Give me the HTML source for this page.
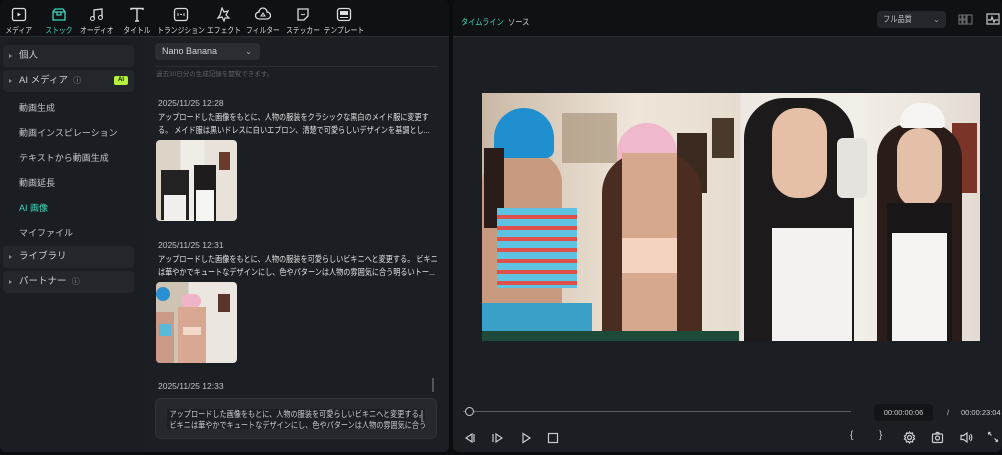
<!DOCTYPE html>
<html><head><meta charset="utf-8"><style>
*{margin:0;padding:0;box-sizing:border-box}
body{width:1002px;height:455px;background:#0b0c0e;font-family:"Liberation Sans","Noto Sans CJK JP",sans-serif;color:#cfd2d6;overflow:hidden;position:relative;font-size:9px}
.abs{position:absolute}
.left{left:0;top:0;width:449px;height:452px;background:#1b1e22;border-radius:6px;overflow:hidden}
.tb{left:0;top:0;width:449px;height:37px;background:#0f1114;border-bottom:1px solid #2a2d31}
.tool{position:absolute;top:7px;width:60px;margin-left:-30px;text-align:center;color:#d8dadd;white-space:nowrap}
.tool svg{display:block;margin:0 auto 3px}
.tool span{display:inline-block;font-size:8px;transform:scaleX(.85)}
.side{left:0;top:38px;width:145px;height:414px;background:#1a1d21}
.grp{position:absolute;left:3px;width:131px;height:22px;background:#23262b;border-radius:4px;font-size:9.5px;line-height:22px;padding-left:16px;color:#c9ccd0}
.grp:before{content:"";position:absolute;left:6px;top:9px;border-left:3px solid #8a8d92;border-top:2px solid transparent;border-bottom:2px solid transparent}
.item{position:absolute;left:19px;font-size:9px;color:#c2c5ca}
.ts{position:absolute;left:158px;font-size:8.5px;color:#bfc2c7}
.desc{position:absolute;left:158px;width:320px;font-size:8.5px;line-height:13px;color:#e0e2e5;white-space:nowrap;transform:scaleX(.84);transform-origin:left top}
.thumb{position:absolute;left:156px;width:81px;height:81px;border-radius:4px;overflow:hidden;background:#e9e4de}
.right{left:453px;top:0;width:549px;height:452px;background:#1b1e22;border-radius:6px;overflow:hidden}
.rh{left:0;top:0;width:549px;height:37px;background:#0f1114;border-bottom:1px solid #2a2d31}
.ic{position:absolute;stroke:#c9ccd0;fill:none;stroke-width:1.2}
.sq{white-space:nowrap;display:inline-block;transform:scaleX(.85);transform-origin:left center}
</style></head><body>
<div class="abs left">
 <div class="abs tb">
  <div class="tool" style="left:19px"><svg width="16" height="15" viewBox="0 0 16 15"><rect x="1.5" y="1.5" width="13" height="12" rx="2" stroke="#ddd" fill="none" stroke-width="1.3"/><path d="M6.5 5.5v4l3.5-2z" fill="#ddd"/></svg><span>メディア</span></div>
  <div class="tool" style="left:59px;color:#3fd6b8"><svg width="16" height="15" viewBox="0 0 16 15"><path d="M2 5h12v8H2zM2 5l2-3h8l2 3M6 5v3h4V5" stroke="#3fd6b8" fill="none" stroke-width="1.3"/></svg><span>ストック</span></div>
  <div class="tool" style="left:97px"><svg width="16" height="15" viewBox="0 0 16 15"><path d="M5 11V3l8-1v8" stroke="#ddd" fill="none" stroke-width="1.3"/><circle cx="3.5" cy="11.5" r="2" stroke="#ddd" fill="none"/><circle cx="11.5" cy="10.5" r="2" stroke="#ddd" fill="none"/></svg><span>オーディオ</span></div>
  <div class="tool" style="left:137px"><svg width="16" height="15" viewBox="0 0 16 15"><path d="M2 3V1.5h12V3M8 1.5V14M6 14h4" stroke="#ddd" fill="none" stroke-width="1.4"/></svg><span>タイトル</span></div>
  <div class="tool" style="left:181px"><svg width="16" height="15" viewBox="0 0 16 15"><rect x="1.5" y="1.5" width="13" height="12" rx="2.5" stroke="#ddd" fill="none" stroke-width="1.3"/><path d="M5 6v3M11 6v3M7 7.5h2" stroke="#ddd"/></svg><span>トランジション</span></div>
  <div class="tool" style="left:224px"><svg width="16" height="15" viewBox="0 0 16 15"><path d="M6 1l2 4 4-1-2 4 3 3-4 0-1 3-2-4-4 1 2-3z" stroke="#ddd" fill="none" stroke-width="1.2"/></svg><span>エフェクト</span></div>
  <div class="tool" style="left:263px"><svg width="16" height="15" viewBox="0 0 16 15"><path d="M4 12a3.5 3.5 0 0 1 0-7 4 4 0 0 1 8 0 3.5 3.5 0 0 1 0 7z" stroke="#ddd" fill="none" stroke-width="1.3"/><path d="M8 6l-2 3 4 0z" stroke="#ddd" fill="none"/></svg><span>フィルター</span></div>
  <div class="tool" style="left:303px"><svg width="16" height="15" viewBox="0 0 16 15"><path d="M3 2h10v7l-4 4H3z" stroke="#ddd" fill="none" stroke-width="1.3"/><path d="M6 7c1 1 3 1 4 0" stroke="#ddd" fill="none"/></svg><span>ステッカー</span></div>
  <div class="tool" style="left:344px"><svg width="16" height="15" viewBox="0 0 16 15"><rect x="1.5" y="1.5" width="13" height="12" rx="2.5" stroke="#ddd" fill="none" stroke-width="1.3"/><rect x="4" y="4" width="8" height="4" fill="#ddd"/><path d="M4 10.5h8" stroke="#ddd"/></svg><span>テンプレート</span></div>
 </div>
 <div class="abs side">
  <div class="grp" style="top:7px">個人</div>
  <div class="grp" style="top:32px">AI メディア &nbsp;<span style="font-size:8px;color:#999">ⓘ</span><span style="position:absolute;right:6px;top:6px;width:14px;height:9px;background:#b6f23a;border-radius:2px;color:#111;font-size:6px;line-height:9px;text-align:center;font-weight:bold">AI</span></div>
  <div class="item" style="top:63px">動画生成</div>
  <div class="item" style="top:88px">動画インスピレーション</div>
  <div class="item" style="top:113px">テキストから動画生成</div>
  <div class="item" style="top:138px">動画延長</div>
  <div class="item" style="top:163px;color:#3fd6b8">AI 画像</div>
  <div class="item" style="top:188px">マイファイル</div>
  <div class="grp" style="top:208px">ライブラリ</div>
  <div class="grp" style="top:233px">パートナー &nbsp;<span style="font-size:8px;color:#999">ⓘ</span></div>
 </div>
 <div class="abs" style="left:155px;top:43px;width:105px;height:17px;background:#2a2d32;border-radius:4px;font-size:9px;line-height:17px;padding-left:7px;color:#d0d3d7">Nano Banana<span style="position:absolute;right:8px;color:#aaa;font-size:8px">⌄</span></div>
 <div class="abs" style="left:155px;top:66px;width:283px;border-top:1px solid #2a2d31"></div>
 <div class="abs" style="left:156px;top:68px;font-size:6.5px;color:#5d6166">過去30日分の生成記録を閲覧できます。</div>
 <div class="ts" style="top:98px">2025/11/25 12:28</div>
 <div class="desc" style="top:111px">アップロードした画像をもとに、人物の服装をクラシックな黒白のメイド服に変更す<br>る。 メイド服は黒いドレスに白いエプロン、清楚で可愛らしいデザインを基調とし...</div>
 <div class="thumb" style="top:140px;background:linear-gradient(90deg,#ddd4c8 0 30%,#f0ece6 30% 60%,#e8e2da 60%)"><div class="abs" style="left:5px;top:30px;width:28px;height:50px;background:#222"></div><div class="abs" style="left:8px;top:55px;width:22px;height:26px;background:#f2f0ee"></div><div class="abs" style="left:38px;top:25px;width:22px;height:56px;background:#1e1c1c"></div><div class="abs" style="left:40px;top:50px;width:18px;height:31px;background:#f5f5f3"></div><div class="abs" style="left:63px;top:12px;width:11px;height:18px;background:#6a3a2a"></div></div>
 <div class="ts" style="top:240px">2025/11/25 12:31</div>
 <div class="desc" style="top:253px">アップロードした画像をもとに、人物の服装を可愛らしいビキニへと変更する。 ビキニ<br>は華やかでキュートなデザインにし、色やパターンは人物の雰囲気に合う明るいトー...</div>
 <div class="thumb" style="top:282px;background:linear-gradient(90deg,#cfc3b3 0 40%,#ebe6df 40%)"><div class="abs" style="left:0;top:5px;width:14px;height:14px;background:#2a8fd0;border-radius:50%"></div><div class="abs" style="left:0;top:30px;width:18px;height:51px;background:#c99a86"></div><div class="abs" style="left:3px;top:42px;width:12px;height:12px;background:#5ab8d8"></div><div class="abs" style="left:25px;top:12px;width:20px;height:14px;background:#f0b4c8;border-radius:8px"></div><div class="abs" style="left:22px;top:25px;width:28px;height:56px;background:#d8a892"></div><div class="abs" style="left:27px;top:45px;width:18px;height:8px;background:#f2d8c8"></div><div class="abs" style="left:62px;top:12px;width:12px;height:18px;background:#5a3428"></div></div>
 <div class="ts" style="top:381px">2025/11/25 12:33</div>
 <div class="abs" style="left:432px;top:378px;width:2px;height:14px;background:#555"></div>
 <div class="abs" style="left:155px;top:398px;width:282px;height:41px;background:#25282d;border-radius:6px;border:1px solid #2f3237"></div>
 <div class="abs" style="left:167px;top:409px;width:258px;height:20px;background:#1c1f23;overflow:hidden"><div style="font-size:8.5px;line-height:11px;padding-left:3px;color:#c8cbd0;white-space:nowrap;transform:scaleX(.84);transform-origin:left top">アップロードした画像をもとに、人物の服装を可愛らしいビキニへと変更する。<br>ビキニは華やかでキュートなデザインにし、色やパターンは人物の雰囲気に合う</div></div>
 <div class="abs" style="left:421px;top:410px;width:2px;height:12px;background:#666"></div>
</div>
<div class="abs right">
 <div class="abs rh">
  <div class="abs" style="left:8px;top:16px;font-size:8.5px;color:#3fd6b8"><span class="sq">タイムライン</span></div>
  <div class="abs" style="left:55px;top:16px;font-size:8.5px;color:#d0d3d7"><span class="sq">ソース</span></div>
  <div class="abs" style="left:424px;top:11px;width:69px;height:17px;background:#23262b;border-radius:4px;font-size:8.5px;line-height:17px;padding-left:6px;color:#c0c3c7"><span class="sq">フル品質</span><span style="position:absolute;right:6px;color:#999">⌄</span></div>
  <svg class="ic" style="left:505px;top:14px" width="15" height="11" viewBox="0 0 15 11"><rect x="1" y="1" width="3" height="4" stroke="#666"/><rect x="1" y="6" width="3" height="4" stroke="#666"/><rect x="5" y="1" width="3" height="4" stroke="#666"/><rect x="5" y="6" width="3" height="4" stroke="#666"/><rect x="9" y="1" width="5" height="9" stroke="#666"/></svg>
  <svg class="ic" style="left:533px;top:13px" width="14" height="12" viewBox="0 0 14 12"><rect x="1" y="1" width="12" height="10"/><path d="M2 7h3l1-3 2 5 1-2h3"/></svg>
 </div>
 <div class="abs" style="left:29px;top:93px;width:498px;height:248px;overflow:hidden;background:#e8e0d6">
  <div class="abs" style="left:0;top:0;width:257px;height:248px;background:linear-gradient(90deg,#c9b8a6 0,#ddd0c0 30%,#efe6da 60%,#e6dccf 100%)"></div>
  <div class="abs" style="left:80px;top:20px;width:55px;height:50px;background:#a08a70;opacity:.6"></div>
  <div class="abs" style="left:195px;top:40px;width:30px;height:60px;background:#3a2a20"></div>
  <div class="abs" style="left:230px;top:25px;width:22px;height:40px;background:#4a3a2c"></div>
  <div class="abs" style="left:0;top:60px;width:80px;height:188px;background:#c89a80;border-radius:30px 30px 0 0"></div>
  <div class="abs" style="left:12px;top:15px;width:60px;height:50px;background:#1f8fd0;border-radius:30px 30px 8px 8px"></div>
  <div class="abs" style="left:2px;top:55px;width:20px;height:80px;background:#2a1c18"></div>
  <div class="abs" style="left:15px;top:115px;width:80px;height:80px;background-image:repeating-linear-gradient(180deg,#5ec3e0 0 7px,#e0504a 7px 11px)"></div>
  <div class="abs" style="left:0;top:210px;width:110px;height:38px;background:#3aa0c8"></div>
  <div class="abs" style="left:135px;top:30px;width:60px;height:50px;background:#f0b8cc;border-radius:30px 30px 10px 10px"></div>
  <div class="abs" style="left:120px;top:60px;width:100px;height:188px;background:#4a2c20;border-radius:40px 40px 0 0"></div>
  <div class="abs" style="left:140px;top:60px;width:55px;height:188px;background:#d6a88e"></div>
  <div class="abs" style="left:140px;top:145px;width:55px;height:35px;background:#f4d4c0"></div>
  <div class="abs" style="left:0;top:238px;width:257px;height:10px;background:#1e4a3a"></div>
  <div class="abs" style="left:259px;top:0;width:239px;height:248px;background:linear-gradient(90deg,#ede8e2 0,#f2eee8 50%,#e4dcd2 100%)"></div>
  <div class="abs" style="left:300px;top:10px;width:25px;height:30px;background:#d8d0c4"></div>
  <div class="abs" style="left:470px;top:30px;width:25px;height:70px;background:#7a3428"></div>
  <div class="abs" style="left:430px;top:40px;width:30px;height:50px;background:#3a2c26;opacity:.7"></div>
  <div class="abs" style="left:262px;top:5px;width:110px;height:243px;background:#1c1a1a;border-radius:40px 40px 0 0"></div>
  <div class="abs" style="left:290px;top:15px;width:55px;height:90px;background:#e6c0a6;border-radius:25px"></div>
  <div class="abs" style="left:290px;top:135px;width:80px;height:113px;background:#f4f2f0"></div>
  <div class="abs" style="left:355px;top:45px;width:30px;height:60px;background:#e6e2de;border-radius:6px"></div>
  <div class="abs" style="left:395px;top:30px;width:85px;height:218px;background:#2a1c18;border-radius:35px 35px 0 0"></div>
  <div class="abs" style="left:415px;top:35px;width:45px;height:80px;background:#e4c0a8;border-radius:22px"></div>
  <div class="abs" style="left:405px;top:110px;width:65px;height:138px;background:#181616"></div>
  <div class="abs" style="left:410px;top:140px;width:55px;height:108px;background:#f6f4f2"></div>
  <div class="abs" style="left:418px;top:10px;width:45px;height:25px;background:#f7f5f2;border-radius:20px 20px 4px 4px"></div>
 </div>
 <div class="abs" style="left:10px;top:411px;width:388px;height:1px;background:#5a5e63"></div>
 <div class="abs" style="left:12px;top:407px;width:9px;height:9px;border:1.3px solid #ccc;border-radius:50%;background:#1b1e22"></div>
 <div class="abs" style="left:421px;top:404px;width:59px;height:17px;background:#121417;border-radius:4px;font-size:7.5px;line-height:17px;text-align:center;color:#c9ccd0">00:00:00:06</div>
 <div class="abs" style="left:494px;top:408px;font-size:7.5px;color:#c9ccd0">/</div>
 <div class="abs" style="left:508px;top:408px;font-size:7.5px;color:#c9ccd0;white-space:nowrap">00:00:23:04</div>
 <svg class="ic" style="left:11px;top:432px" width="12" height="12" viewBox="0 0 12 12"><path d="M8 2L2 6l6 4zM10 2v8"/></svg>
 <svg class="ic" style="left:38px;top:432px" width="12" height="12" viewBox="0 0 12 12"><path d="M5 2l6 4-6 4zM2 2v8"/></svg>
 <svg class="ic" style="left:67px;top:432px" width="12" height="12" viewBox="0 0 12 12"><path d="M3 1.5l7 4.5-7 4.5z"/></svg>
 <svg class="ic" style="left:94px;top:432px" width="12" height="12" viewBox="0 0 12 12"><rect x="1.5" y="1.5" width="9" height="9"/></svg>
 <div class="abs" style="left:397px;top:430px;font-size:10px;color:#c9ccd0">{</div>
 <div class="abs" style="left:426px;top:430px;font-size:10px;color:#c9ccd0">}</div>
 <svg class="ic" style="left:450px;top:431px" width="13" height="13" viewBox="0 0 13 13"><circle cx="6.5" cy="6.5" r="2"/><path d="M6.5 1l1 1.5 2-.5.3 2 1.7 1-1 1.5 1 1.5-1.7 1-.3 2-2-.5-1 1.5-1-1.5-2 .5-.3-2-1.7-1 1-1.5-1-1.5 1.7-1 .3-2 2 .5z"/></svg>
 <svg class="ic" style="left:478px;top:431px" width="13" height="13" viewBox="0 0 13 13"><rect x="1.5" y="3" width="10" height="8.5" rx="1"/><circle cx="6.5" cy="7" r="2"/><path d="M4.5 3l1-1.5h2l1 1.5"/></svg>
 <svg class="ic" style="left:506px;top:431px" width="14" height="13" viewBox="0 0 14 13"><path d="M2 4.5h2.5L8 2v9L4.5 8.5H2z"/><path d="M10 4.5c1 1 1 3 0 4M11.5 3c1.8 2 1.8 5 0 7"/></svg>
 <svg class="ic" style="left:534px;top:431px" width="12" height="12" viewBox="0 0 12 12"><path d="M1.5 1.5l3 3M1.5 1.5v2M1.5 1.5h2M10.5 10.5l-3-3M10.5 10.5v-2M10.5 10.5h-2"/></svg>
</div>
</body></html>
